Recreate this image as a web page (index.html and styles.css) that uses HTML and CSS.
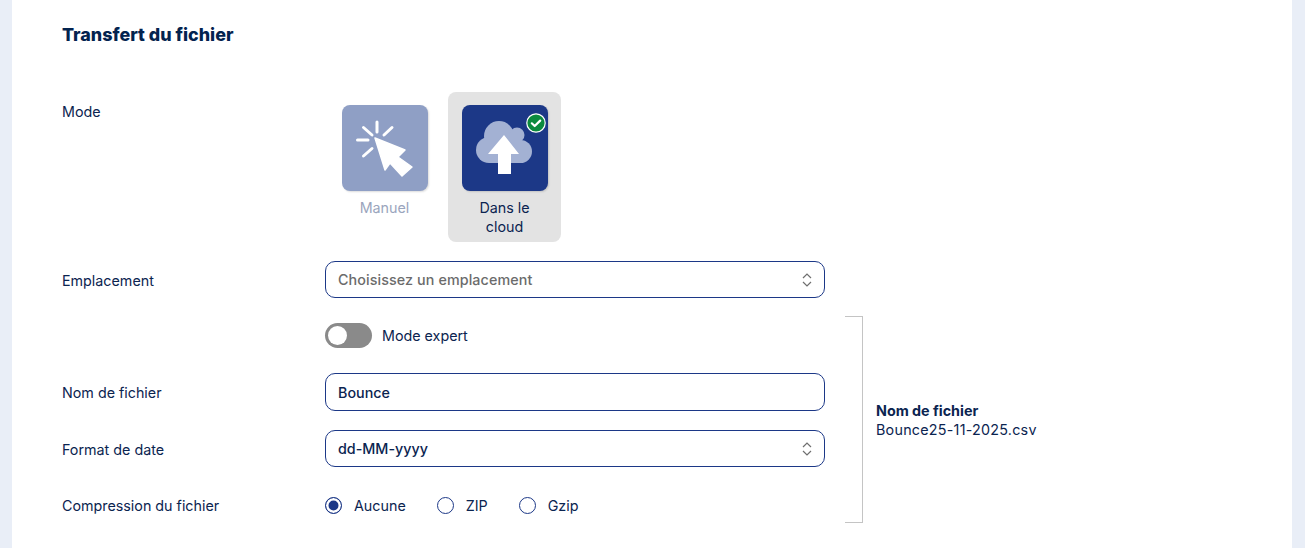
FILE: index.html
```html
<!DOCTYPE html>
<html lang="fr">
<head>
<meta charset="utf-8">
<title>Transfert du fichier</title>
<link rel="stylesheet" href="styles.css">
</head>
<body>
<main class="panel">
  <h2 class="title">Transfert du fichier</h2>
  <div class="row row-mode">
    <div class="label label-mode">Mode</div>
    <div class="modes">
      <div class="mode mode-off">
        <div class="tile tile-off">
          <svg width="86" height="86" viewBox="0 0 86 86">
            <g stroke="#fff" stroke-width="3" stroke-linecap="round" fill="none">
              <path d="M35 17V27M15.500 35H26M21.500 22.500L30 30M42 30L50 22.500M21.500 51L30 43.500"/>
            </g>
            <path d="M33 33L63 45L56 52L70 62L60 71L48 58L43 65Z" fill="#fff" stroke="#fff" stroke-width="1.500" stroke-linejoin="round"/>
          </svg>
        </div>
        <div class="mode-name">Manuel</div>
      </div>
      <div class="mode mode-on">
        <div class="tile tile-on">
          <svg width="86" height="86" viewBox="0 0 86 86">
            <g fill="#a3b1d3">
              <circle cx="37" cy="31" r="15"/>
              <circle cx="55" cy="30" r="7.500"/>
              <circle cx="27" cy="45" r="13"/>
              <circle cx="58.500" cy="46.500" r="11.500"/>
              <rect x="27" y="32" width="32" height="26"/>
            </g>
            <path d="M42 30L57 49H49V69H36V49H26Z" fill="#fff"/>
          </svg>
          <svg class="badge" width="20" height="20" viewBox="0 0 20 20">
            <circle cx="10" cy="10" r="9.200" fill="#0b8a3e" stroke="#fff" stroke-width="1.200"/>
            <path d="M5.800 10.300L8.700 13L14.200 7.600" fill="none" stroke="#fff" stroke-width="2.200" stroke-linecap="round" stroke-linejoin="round"/>
          </svg>
        </div>
        <div class="mode-name">Dans le cloud</div>
      </div>
    </div>
  </div>
  <div class="row row-place">
    <div class="label label-low">Emplacement</div>
    <div class="field field-select placeholder">
      <span>Choisissez un emplacement</span>
      <svg class="updown" width="10" height="14" viewBox="0 0 10 14"><path d="M1 5L5 1L9 5M1 9L5 13L9 9" fill="none" stroke="#6f6f6f" stroke-width="1.200"/></svg>
    </div>
  </div>
  <div class="expert">
    <div class="expert-form">
      <div class="row row-toggle">
        <div class="label"></div>
        <div class="toggle-wrap">
          <span class="toggle"><span class="knob"></span></span>
          <span>Mode expert</span>
        </div>
      </div>
      <div class="row row-name">
        <div class="label">Nom de fichier</div>
        <div class="field">Bounce</div>
      </div>
      <div class="row row-date">
        <div class="label label-low">Format de date</div>
        <div class="field field-select">
          <span>dd-MM-yyyy</span>
          <svg class="updown" width="10" height="14" viewBox="0 0 10 14"><path d="M1 5L5 1L9 5M1 9L5 13L9 9" fill="none" stroke="#6f6f6f" stroke-width="1.200"/></svg>
        </div>
      </div>
      <div class="row row-zip">
        <div class="label">Compression du fichier</div>
        <div class="radios">
          <label class="radio"><span class="dot dot-on"></span>Aucune</label>
          <label class="radio"><span class="dot"></span>ZIP</label>
          <label class="radio"><span class="dot"></span>Gzip</label>
        </div>
      </div>
    </div>
    <div class="bracket"></div>
    <div class="preview">
      <strong>Nom de fichier</strong>
      <span class="preview-name">Bounce25-11-2025.csv</span>
    </div>
  </div>
</main>
</body>
</html>
```
FILE: styles.css
```css
* { box-sizing: border-box; }
html, body { height: 100%; }
body {
  margin: 0;
  background: #e9eef7;
  color: #0b2450;
  font-family: "Inter", sans-serif;
  font-size: 14.300px;
  line-height: 19px;
  overflow: hidden;
}
.panel {
  margin: 0 13px 0 12px;
  height: 548px;
  background: #fff;
  padding: 24px 50px 0;
}
.title {
  margin: 0;
  font-family: "Inter", sans-serif;
  font-size: 17.900px;
  font-weight: 800;
  line-height: 21px;
  color: #03234f;
}
.row { display: flex; align-items: center; width: 763px; }
.label { width: 263px; flex: none; }
.label-low { padding-top: 2px; }
.row-mode { align-items: flex-start; margin-top: 47px; }
.label-mode { padding-top: 10px; }
.modes { display: flex; gap: 7px; padding-left: 3px; }
.mode { width: 113px; height: 150px; padding: 13px 0 0; border-radius: 8px; text-align: center; }
.mode-on { background: #e3e3e3; }
.tile { position: relative; width: 86px; height: 86px; margin: 0 auto 7px; border-radius: 8px; box-shadow: 1px 1px 2px rgba(0,0,0,.14); }
.tile svg { display: block; }
.tile-off { background: #8f9fc5; }
.tile-on { background: #1c3887; }
.badge { position: absolute; top: 8px; right: 2px; }
.mode-off .mode-name { color: #9aa5bd; }
.mode-name { padding: 0 20px; }
.row-place { margin-top: 19px; }
.field {
  flex: 1;
  height: 37px;
  display: flex;
  align-items: center;
  justify-content: space-between;
  padding: 0 12px;
  border: 1px solid #1c3887;
  border-radius: 10px;
  font-weight: 500;
}
.placeholder { color: #6b6b6b; letter-spacing: .1px; }
.row-name .field { height: 38px; }
.updown { display: block; }
.expert { display: flex; align-items: center; margin-top: 18px; height: 207px; }
.expert-form { flex: none; width: 763px; align-self: flex-start; }
.row-toggle { padding-top: 7px; }
.toggle-wrap { display: flex; align-items: center; gap: 10px; }
.toggle { display: block; width: 47px; height: 25px; border-radius: 13px; background: #8a8a8a; padding: 3px; }
.knob { display: block; width: 19px; height: 19px; border-radius: 50%; background: #fff; }
.row-name { margin-top: 25px; }
.row-date { margin-top: 19px; }
.row-zip { margin-top: 29px; }
.radios { display: flex; gap: 31px; }
.radio { display: flex; align-items: center; gap: 12px; }
.dot { display: block; width: 17px; height: 17px; border-radius: 50%; border: 1.500px solid #1c3887; background: #fff; }
.dot-on { background: #1c3887; box-shadow: inset 0 0 0 2.500px #fff; }
.bracket {
  flex: none;
  width: 18px;
  height: 207px;
  margin-left: 20px;
  border: 1px solid #c4c4c4;
  border-left: 0;
}
.preview { display: flex; flex-direction: column; margin-left: 13px; }
.preview strong { font-weight: 700; }
.preview-name { letter-spacing: .25px; }
```
